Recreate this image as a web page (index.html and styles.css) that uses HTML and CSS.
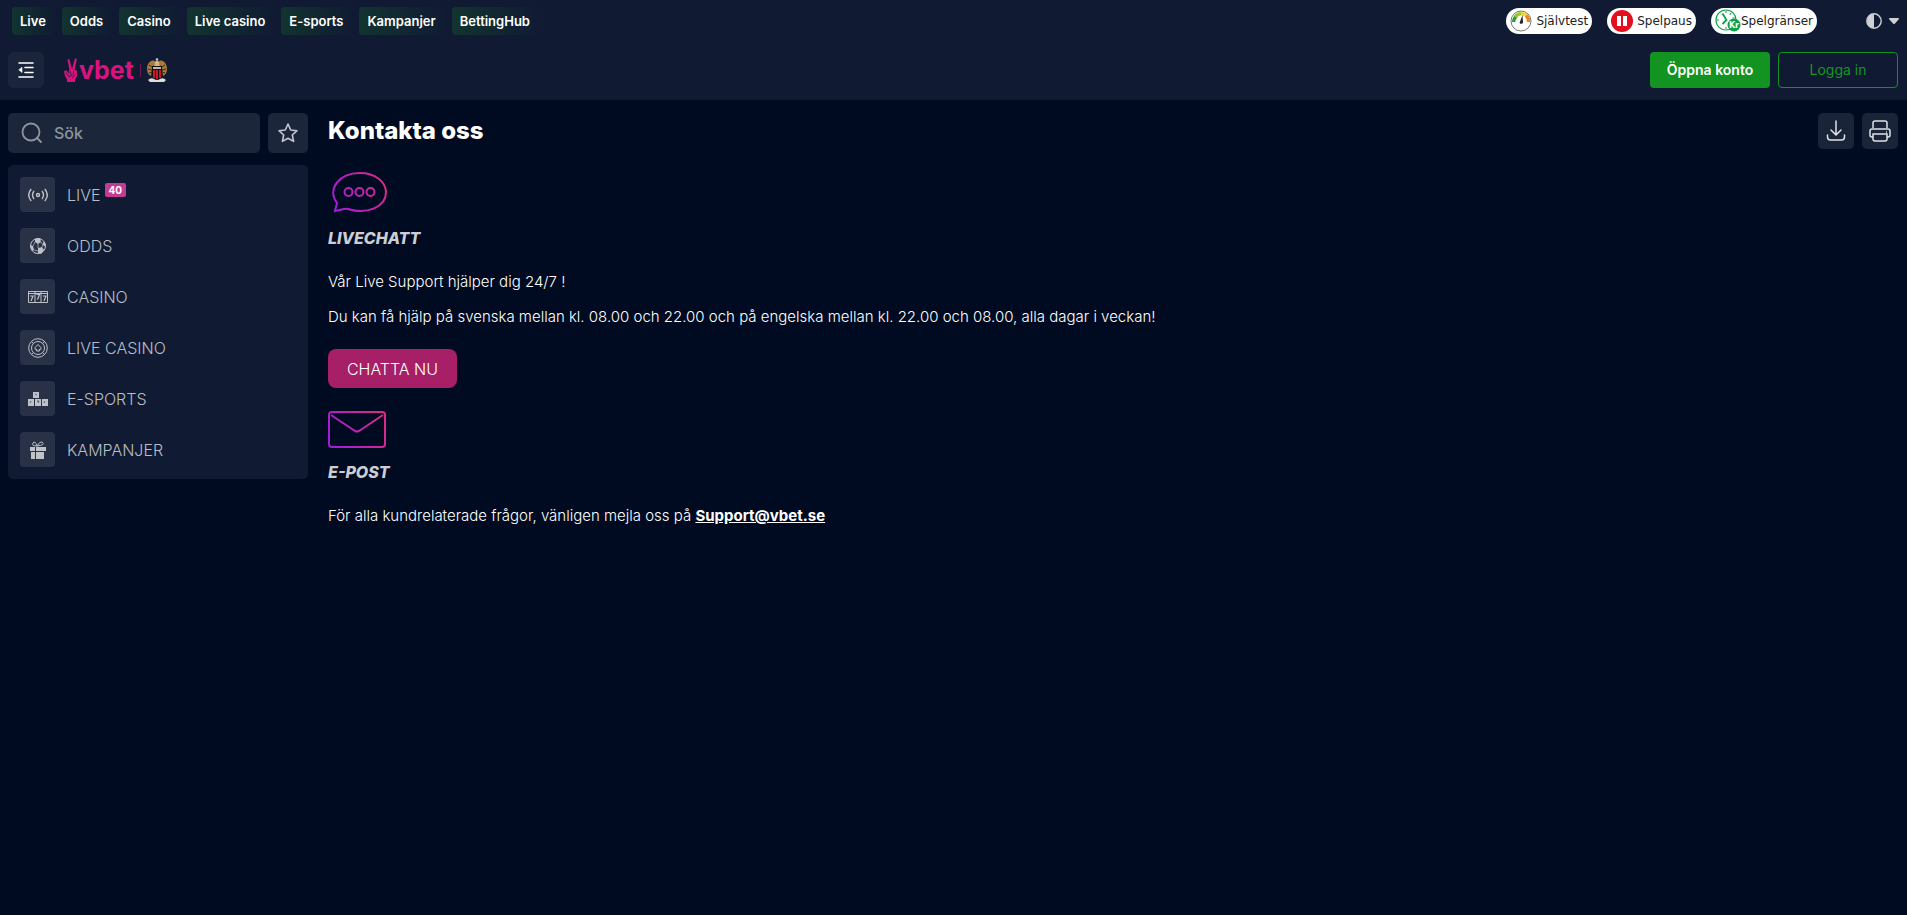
FILE: index.html
```html
<!DOCTYPE html>
<html lang="sv">
<head>
<meta charset="utf-8">
<title>Kontakta oss</title>
<link rel="stylesheet" href="styles.css">
</head>
<body>
<header class="header">
  <div class="topbar">
    <nav class="topnav">
      <a href="#">Live</a><a href="#">Odds</a><a href="#">Casino</a><a href="#">Live casino</a><a href="#">E-sports</a><a href="#">Kampanjer</a><a href="#">BettingHub</a>
    </nav>
    <div class="tools">
      <a class="pill" href="#">
        <svg width="22" height="22" viewBox="0 0 22 22" fill="none"><circle cx="11" cy="11" r="10" stroke="#555" stroke-width=".8"/><path d="M3.500 12a7.500 7.500 0 0 1 2.500-5.500" stroke="#2e9b3c" stroke-width="3.500"/><path d="M5.500 7a7.500 7.500 0 0 1 5.500-3.500" stroke="#9cc921" stroke-width="3.500"/><path d="M11 3.500a7.500 7.500 0 0 1 5 2" stroke="#f5d327" stroke-width="3.500"/><path d="M16 5.500a7.500 7.500 0 0 1 2.500 6.500" stroke="#ef8420" stroke-width="3.500"/><path d="M12.500 5l.5 8-2 1-1.500-1z" fill="#222"/></svg>
        Självtest</a>
      <a class="pill" href="#">
        <svg width="22" height="22" viewBox="0 0 22 22"><circle cx="11" cy="11" r="11" fill="#e30f1d"/><path d="M6 6h4v10H6zM12 6h4v10h-4z" fill="#fff"/></svg>
        Spelpaus</a>
      <a class="pill pill-limits" href="#">
        <svg width="26" height="24" viewBox="0 0 26 24" fill="none"><circle cx="11" cy="11" r="10" stroke="#0ba14b" stroke-width="1.200"/><path d="M7.500 4.500l4 6.500-4 4" stroke="#0ba14b" stroke-width="1.800"/><path d="M11 2v2M2 11h2M11 18v2M16 4l-1 2M19.500 9h-2" stroke="#0ba14b"/><circle cx="19" cy="16" r="6.500" fill="#0ba14b"/><text x="19" y="19" text-anchor="middle" class="kr">Kr</text></svg>
        Spelgränser</a>
      <button class="theme" aria-label="Tema"><svg width="34" height="16" viewBox="0 0 34 16"><circle cx="8" cy="8" r="7.200" fill="none" stroke="#cfd0d6" stroke-width="1.400"/><path d="M8 1a7 7 0 0 0 0 14z" fill="#cfd0d6"/><path d="M24 5h8q2 0 .6 1.600L29 10.500q-1 1-2 0L23.400 6.600Q22 5 24 5z" fill="#cfd0d6"/></svg></button>
    </div>
  </div>
  <div class="mainbar">
    <button class="square menu" aria-label="Meny"><svg width="16" height="16" viewBox="0 0 16 16" fill="none" stroke="#fff" stroke-width="1.600" stroke-linecap="round"><path d="M1 1h14M7 5.500h8M7 10.500h8M1 15h14"/><path d="M4 5.500v5L1 8z" fill="#fff" stroke-width=".6"/></svg></button>
    <a class="logo" href="#" aria-label="vbet">
      <svg width="14" height="24" viewBox="0 0 14 24"><path d="M3.500 1.500q1.200-1.200 2 .3L8 11l-2.500 1zM11 .6q1.700-.6 1.800 1L10.500 12 8 11zM0 13.500q1-1.500 3-.8l1.500 3L5 12l2.500-1 2 .6 3.500 1.200V18l-2 4v2H3v-2.500L1 18z" fill="#d9127f"/><path d="M2 14.500l3 4.500 4-2.500M6 13l1 4M9.500 13v3M8 20.500l3-4" stroke="#101b33" fill="none" stroke-width=".7"/></svg>
      <span class="wordmark">vbet</span><span class="logo-rule"></span>
      <svg width="20" height="25" viewBox="0 0 20 25"><path d="M9 4C5 0 0 5 0 11c0 4 2 6 4 7l1-8zM11 4c4-4 9 1 9 7 0 4-2 6-4 7l-1-8z" fill="#aa7838"/><path d="M2 7l3 2M1 11l4 1M2 15l3-1M18 7l-3 2M19 11l-4 1M18 15l-3-1" stroke="#382d26"/><path d="M8 4q2-3 4 0l1 4H7z" fill="#d8b377"/><circle cx="10" cy="1.500" r="1.300" fill="#ccc"/><path d="M5 8h10v11q-5 5-10 0z" fill="#111"/><path d="M6 9h8v2H6z" fill="#bbb"/><path d="M6 12h2v8H6zM9 12h2v9H9zM12 12h2v8h-2z" fill="#c91827"/><path d="M1 22q3-3 6-1 3 2 6 0t6 1l-2 2H3z" fill="#ddd"/></svg>
    </a>
    <div class="account"><button class="account-btn primary">Öppna konto</button><button class="account-btn outline">Logga in</button></div>
  </div>
</header>
<div class="layout">
  <aside class="sidebar">
    <div class="search-row">
      <label class="search"><svg width="22" height="22" viewBox="0 0 22 22" fill="none" stroke="#8f949e" stroke-width="1.800" stroke-linecap="round"><circle cx="10" cy="10" r="8.500"/><path d="M16 16l4 4"/></svg><input type="text" placeholder="Sök" aria-label="Sök"></label>
      <button class="favorite" aria-label="Favoriter"><svg width="22" height="22" viewBox="0 0 22 22" fill="none" stroke="#c5c8ce" stroke-width="1.600" stroke-linejoin="round"><path d="M11 2l2.700 6 6.300.7-4.700 4.300 1.300 6.400L11 16.200l-5.600 3.200L6.700 13 2 8.700 8.300 8z"/></svg></button>
    </div>
    <nav class="sidenav">
      <a href="#"><span class="tile"><svg width="20" height="20" viewBox="0 0 20 20" fill="none" stroke="#bfc2c9" stroke-width="1.400"><circle cx="10" cy="10" r="1.500"/><path d="M6 6q-3 4 0 8M14 6q3 4 0 8M3.200 4q-5 6 0 12M16.800 4q5 6 0 12"/></svg></span>LIVE <span class="badge">40</span></a>
      <a href="#"><span class="tile"><svg width="18" height="18" viewBox="0 0 18 18"><circle cx="9" cy="9" r="7.500" fill="none" stroke="#bfc2c9"/><path d="M6 2l5-1 1 4-3 2-3-2zM1 8l3 1 1 4-2 1zM9 11l4-1 2 3-3 4-3-1zM14 5l2 1 1 4-3-2zM5 15l3 2-3-1z" fill="#bfc2c9"/><path d="M6 5L4 9M9 7v4M12 5l2 3M5 13l4 1M13 10l1-2" stroke="#bfc2c9" stroke-width=".7"/></svg></span>ODDS</a>
      <a href="#"><span class="tile"><svg width="20" height="14" viewBox="0 0 20 14" fill="none" stroke="#bfc2c9"><path d="M.5 1.500h19v11H.5zM7 1v12M13 1v12M1 3.500h18"/><path d="M2 6h3l-2 5M8.500 4.500h3l-2 5M15 6h3l-2 5" stroke-width="1.200"/></svg></span>CASINO</a>
      <a href="#"><span class="tile"><svg width="20" height="20" viewBox="0 0 20 20" fill="none" stroke="#bfc2c9"><circle cx="10" cy="10" r="9.300"/><circle cx="10" cy="10" r="6.500"/><path d="M3.500 3.500l2 2M16.500 3.500l-2 2M3.500 16.500l2-2M16.500 16.500l-2-2"/><path d="M10 6.500l3 3.200q.5 2.300-2 2l.5 1.300h-3l.5-1.300q-2.500.3-2-2z"/></svg></span>LIVE CASINO</a>
      <a href="#"><span class="tile"><svg width="20" height="14" viewBox="0 0 20 14"><path d="M5 0h6v6H5zM0 7h6v7H0zM7 7h6v7H7zM14 7h6v7h-6z" fill="#bfc2c9"/><path d="M7 2l2 1M2 11l1-2M9 9l2 0-1 2M16 11l1-2" stroke="#293246" stroke-width=".7" fill="none"/></svg></span>E-SPORTS</a>
      <a href="#"><span class="tile"><svg width="18" height="18" viewBox="0 0 18 18" fill="#bfc2c9"><path d="M1 6h5v4H1zM7 6h10v4H7zM2 11h4v7H2zM7 11h8v7H7z"/><path d="M8 5Q2 5 4 2t4 3q3-5 5-4 4 3-5 4" fill="none" stroke="#bfc2c9"/></svg></span>KAMPANJER</a>
    </nav>
  </aside>
  <main class="content">
    <div class="title-row"><h1>Kontakta oss</h1><div class="page-tools">
      <button class="square" aria-label="Ladda ner"><svg width="20" height="22" viewBox="0 0 20 22" fill="none" stroke="#e0e2e6" stroke-width="1.500" stroke-linecap="round"><path d="M10 1v13M5 10l5 5 5-5M1.500 15v2q0 3 3 3h11q3 0 3-3v-2"/></svg></button>
      <button class="square" aria-label="Skriv ut"><svg width="22" height="22" viewBox="0 0 22 22" fill="none" stroke="#e0e2e6" stroke-width="1.500"><path d="M4 8V3q0-2 2-2h10q2 0 2 2v5M4 17H3q-2 0-2-2v-4q0-2 2-2h16q2 0 2 2v4q0 2-2 2h-1M4 14h14v5q0 2-2 2H6q-2 0-2-2zM17 12h1"/></svg></button></div></div>
    <svg class="chat-art" width="64" height="44" viewBox="0 0 64 44" fill="none" stroke="url(#glow)" stroke-width="2"><defs><linearGradient id="glow" gradientUnits="userSpaceOnUse" x1="5" y1="38" x2="54" y2="12"><stop stop-color="#a31be0"/><stop offset="1" stop-color="#d82a88"/></linearGradient></defs><path d="M7 41l2-8C-1 20 10 3 32 3c15 0 26 9 26 19 0 15-19 23-38 17-3-1-7 1-13 2z"/><circle cx="20.500" cy="22" r="4"/><circle cx="31.500" cy="22" r="4"/><circle cx="42.500" cy="22" r="4"/></svg>
    <h2>LIVECHATT</h2>
    <p>Vår Live Support hjälper dig 24/7 !</p>
    <p>Du kan få hjälp på svenska mellan kl. 08.00 och 22.00 och på engelska mellan kl. 22.00 och 08.00, alla dagar i veckan!</p>
    <button class="chat-btn">CHATTA NU</button>
    <svg width="58" height="38" viewBox="0 0 58 38" fill="none" stroke="url(#glow)" stroke-width="2" stroke-linejoin="round"><rect x="1" y="2" width="56" height="35" rx="3"/><path d="M3 5l24 16q2 1 4 0L55 5"/></svg>
    <h2>E-POST</h2>
    <p>För alla kundrelaterade frågor, vänligen mejla oss på <a href="mailto:Support@vbet.se">Support@vbet.se</a></p>
  </main>
</div>
</body>
</html>
```
FILE: styles.css
```css
* { box-sizing: border-box; }
body { margin: 0; min-height: 100vh; background: #000b21; color: #fff; font: 14px/20px Inter, sans-serif; }
a { color: inherit; text-decoration: none; }
button { font: inherit; border: 0; padding: 0; cursor: pointer; }
svg { display: block; flex: none; }
.header { background: #101b33; }
.topbar, .mainbar, .topnav, .tools, .logo, .account, .search-row, .search, .sidenav a, .title-row, .page-tools { display: flex; align-items: center; }
.topbar { height: 42px; justify-content: space-between; padding: 0 7px 0 12px; }
.topnav { gap: 8px; font-size: 13px; font-weight: 600; }
.topnav a { padding: 4px 8px; border-radius: 4px; background: linear-gradient(90deg, #12342f, #101b33); }
.tools { gap: 15px; }
.pill { height: 26px; padding: 0 4px; display: flex; align-items: center; gap: 4px; background: #fff; color: #222; border-radius: 13px; font: 12px "DejaVu Sans", sans-serif; }
.pill-limits { gap: 0; }
.kr { fill: #fff; font: bold 8px "DejaVu Sans", sans-serif; }
.theme { background: none; margin-left: 34px; }
.mainbar { padding: 10px 9px 12px 8px; }
.square { width: 36px; height: 36px; display: grid; place-items: center; border-radius: 5px; background: #192438; }
.menu { background: #1a253c; }
.logo { margin-left: 20px; }
.wordmark { margin-left: 1px; color: #d9127f; font: 700 25px/24px Inter, sans-serif; }
.logo-rule { width: 1px; height: 13px; background: #69194f; margin: 0 6px; }
.account { gap: 8px; margin-left: auto; }
.account-btn { width: 120px; height: 36px; border-radius: 4px; font-size: 14px; }
.primary { background: #129322; color: #fff; font-weight: 600; }
.outline { background: none; border: 1px solid #129322; color: #159624; }
.layout { display: flex; align-items: flex-start; gap: 20px; padding: 13px 9px 13px 8px; }
.sidebar { width: 300px; flex: none; }
.search-row { gap: 8px; margin-bottom: 12px; }
.search, .favorite { height: 40px; background: #1b263a; border-radius: 5px; }
.search { flex: 1; padding: 0 13px; gap: 11px; }
.search input { min-width: 0; width: 100%; border: 0; padding: 0; background: none; color: #fff; font: 500 16px Inter, sans-serif; outline: 0; }
.search input::placeholder { color: #8f949e; opacity: 1; }
.favorite { width: 40px; display: grid; place-items: center; }
.sidenav { padding: 12px; border-radius: 5px; background: #101b33; display: grid; gap: 16px; }
.sidenav a { color: #b9bdc5; font-size: 16px; font-weight: 300; }
.tile { width: 35px; height: 35px; margin-right: 12px; display: grid; place-items: center; border-radius: 4px; background: #283145; }
.badge { align-self: flex-start; margin: 6px 0 0 4px; padding: 0 4px; background: #c53b93; color: #fff; border-radius: 2px; font: 700 10px/14px Inter, sans-serif; }
.content { flex: 1; min-width: 0; }
.title-row { justify-content: space-between; }
.page-tools { gap: 8px; }
h1 { margin: 0; font-size: 24px; line-height: 36px; font-weight: 800; }
h2 { margin: 14px 0 24px; color: #cdced3; font-size: 16px; line-height: 20px; font-weight: 800; font-style: italic; }
p { margin: 0 0 15px; font-size: 15px; font-weight: 300; }
p a { font-weight: 700; text-decoration: underline; }
.chat-art { margin-top: 21px; }
.chat-btn { display: block; width: 129px; height: 39px; margin: 22px 0; border-radius: 8px; background: #a71f66; color: #fff; font-size: 16px; font-weight: 300; }
```
